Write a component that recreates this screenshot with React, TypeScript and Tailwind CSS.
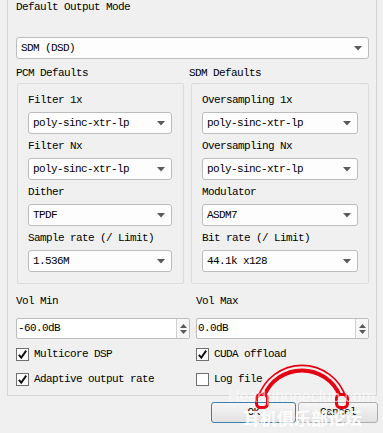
import React from "react";

const font = "font-['Liberation_Mono',monospace] text-[11px] tracking-[-0.6px] text-black";

function Arrow() {
  return (
    <svg width="8" height="5" viewBox="0 0 8 5" className="shrink-0">
      <path d="M0 0H8L4 4.5Z" fill="#5a5a5a" />
    </svg>
  );
}

function Combo({ value, className = "" }: { value: string; className?: string }) {
  return (
    <div
      className={`h-[22px] flex items-center justify-between pl-[4px] pr-[6px] bg-[#fdfdfd] border border-[#bdbdbd] rounded-[3px] ${className}`}
    >
      <span className="leading-none">{value}</span>
      <Arrow />
    </div>
  );
}

function Spin({ value, className = "" }: { value: string; className?: string }) {
  return (
    <div className={`h-[21px] flex bg-white border border-[#bdbdbd] rounded-[2px] ${className}`}>
      <div className="flex-1 flex items-center pl-[1px]">{value}</div>
      <div className="w-[13px] border-l border-[#d0d0d0] flex flex-col items-center justify-center gap-[2px] bg-[#f7f7f7]">
        <svg width="7" height="4" viewBox="0 0 7 4">
          <path d="M0 4H7L3.5 0Z" fill="#5a5a5a" />
        </svg>
        <svg width="7" height="4" viewBox="0 0 7 4">
          <path d="M0 0H7L3.5 4Z" fill="#5a5a5a" />
        </svg>
      </div>
    </div>
  );
}

function Check({ label, checked }: { label: string; checked: boolean }) {
  return (
    <div className="h-[16px] flex items-center gap-[5px]">
      <div className="w-[13px] h-[13px] bg-white border border-[#6f6f6f] flex items-center justify-center">
        {checked && (
          <svg width="11" height="11" viewBox="0 0 11 11">
            <path d="M1.8 5.8L4.3 8.6L9.2 1.6" fill="none" stroke="#111" strokeWidth="1.9" />
          </svg>
        )}
      </div>
      <span>{label}</span>
    </div>
  );
}

function Field({ label, value, width }: { label: string; value: string; width: string }) {
  return (
    <div className="flex flex-col">
      <div className="h-[16px] leading-[16px]">{label}</div>
      <Combo value={value} className={`mt-[4px] ${width}`} />
    </div>
  );
}

export default function App() {
  return (
    <div className={`relative w-[383px] h-[433px] overflow-hidden bg-[#f0f0f0] ${font}`}>
      <div className="ml-[7px] w-[370px] h-[396px] border-x border-b border-[#d5d5d5] pl-[8px] pr-[7px] flex flex-col">
        <div className="h-[14px] leading-[14px]">Default Output Mode</div>
        <Combo value="SDM (DSD)" className="mt-[23px]" />

        <div className="mt-[6px] h-[16px] leading-[16px] flex">
          <span className="w-[173px]">PCM Defaults</span>
          <span>SDM Defaults</span>
        </div>

        <div className="mt-[2px] flex">
          <div className="ml-[1px] w-[167px] h-[201px] border border-[#dcdcdc] rounded-[2px] pt-[8px] pl-[10px] flex flex-col gap-[4px]">
            <Field label="Filter 1x" value="poly-sinc-xtr-lp" width="w-[144px]" />
            <Field label="Filter Nx" value="poly-sinc-xtr-lp" width="w-[144px]" />
            <Field label="Dither" value="TPDF" width="w-[144px]" />
            <Field label="Sample rate (/ Limit)" value="1.536M" width="w-[144px]" />
          </div>
          <div className="ml-[7px] w-[178px] h-[201px] border border-[#dcdcdc] rounded-[2px] pt-[8px] pl-[10px] flex flex-col gap-[4px]">
            <Field label="Oversampling 1x" value="poly-sinc-xtr-lp" width="w-[156px]" />
            <Field label="Oversampling Nx" value="poly-sinc-xtr-lp" width="w-[156px]" />
            <Field label="Modulator" value="ASDM7" width="w-[156px]" />
            <Field label="Bit rate (/ Limit)" value="44.1k x128" width="w-[156px]" />
          </div>
        </div>

        <div className="mt-[9px] h-[16px] leading-[16px] flex">
          <span className="w-[180px]">Vol Min</span>
          <span>Vol Max</span>
        </div>
        <div className="mt-[9px] flex gap-[6px]">
          <Spin value="-60.0dB" className="w-[174px]" />
          <Spin value="0.0dB" className="w-[173px]" />
        </div>

        <div className="mt-[7px] grid grid-cols-[180px_1fr]">
          <Check label="Multicore DSP" checked />
          <Check label="CUDA offload" checked />
        </div>
        <div className="mt-[9px] grid grid-cols-[180px_1fr]">
          <Check label="Adaptive output rate" checked />
          <Check label="Log file" checked={false} />
        </div>
      </div>

      <div className="mt-[6px] flex justify-end gap-[2px] pr-[5px]">
        <button className="w-[85px] h-[21px] border border-[#3c7fb1] rounded-[3px] bg-gradient-to-b from-[#f6f6f6] to-[#e3e3e3]">
          OK
        </button>
        <button className="w-[80px] h-[21px] border border-[#acacac] rounded-[3px] bg-gradient-to-b from-[#f6f6f6] to-[#e0e0e0]">
          Cancel
        </button>
      </div>

      <svg
        className="absolute left-[250px] top-[360px] pointer-events-none"
        width="110"
        height="56"
        viewBox="250 360 110 56"
      >
        <path d="M258 398 A46 46 0 0 1 346 398" fill="none" stroke="#e50012" strokeWidth="1.6" />
        <path d="M264 396 A41 41 0 0 1 340 396" fill="none" stroke="#e50012" strokeWidth="4" />
        <rect x="256.5" y="394.5" width="11" height="13" rx="4" fill="none" stroke="#e50012" strokeWidth="3" />
        <rect x="336.5" y="394.5" width="11" height="13" rx="4" fill="none" stroke="#e50012" strokeWidth="3" />
      </svg>
      <div className="absolute left-[228px] top-[389px] font-['Liberation_Sans',sans-serif] text-[16px] tracking-normal leading-[16px] text-white/60 pointer-events-none">
        Headphoneclub.com
      </div>
      <div className="absolute left-[243px] top-[408px] font-['Noto_Sans_CJK_SC',sans-serif] font-bold text-[17px] tracking-normal leading-[20px] text-white/90 pointer-events-none">
        耳机俱乐部论坛
      </div>
    </div>
  );
}
